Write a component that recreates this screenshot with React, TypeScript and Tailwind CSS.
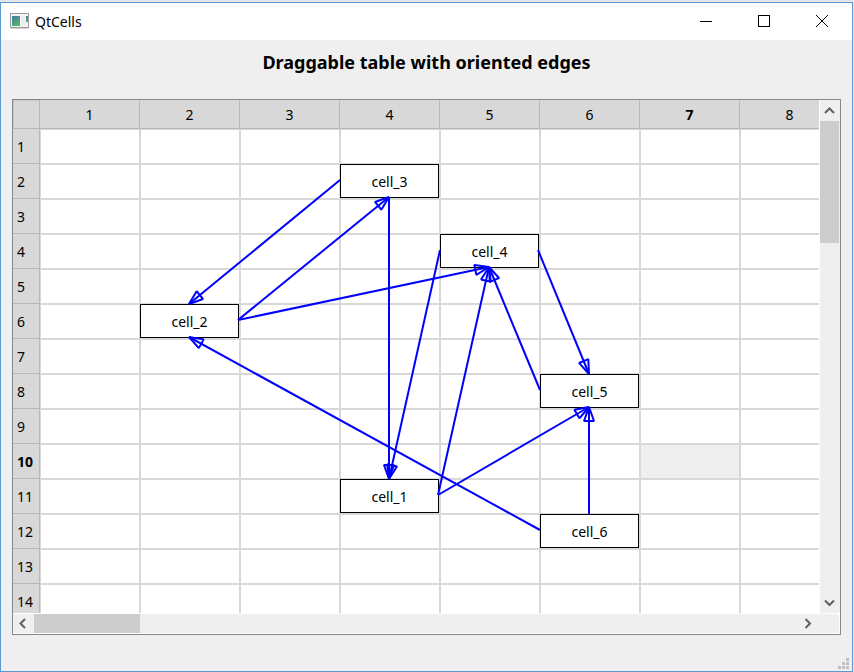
import React from 'react';

type Side = 'top' | 'right' | 'bottom' | 'left';
type Point = { x: number; y: number };
type CellNode = { id: string; col: number; row: number };
type Edge = { from: string; fromSide: Side; to: string; toSide: Side };

const COL_WIDTH = 100;
const ROW_HEIGHT = 35;
const COLUMNS = Array.from({ length: 8 }, (_, i) => i + 1);
const ROWS = Array.from({ length: 14 }, (_, i) => i + 1);
const CURRENT = { col: 7, row: 10 };

const nodes: CellNode[] = [
  { id: 'cell_1', col: 4, row: 11 },
  { id: 'cell_2', col: 2, row: 6 },
  { id: 'cell_3', col: 4, row: 2 },
  { id: 'cell_4', col: 5, row: 4 },
  { id: 'cell_5', col: 6, row: 8 },
  { id: 'cell_6', col: 6, row: 12 },
];

const edges: Edge[] = [
  { from: 'cell_3', fromSide: 'left', to: 'cell_2', toSide: 'top' },
  { from: 'cell_2', fromSide: 'right', to: 'cell_3', toSide: 'bottom' },
  { from: 'cell_2', fromSide: 'right', to: 'cell_4', toSide: 'bottom' },
  { from: 'cell_3', fromSide: 'bottom', to: 'cell_1', toSide: 'top' },
  { from: 'cell_4', fromSide: 'left', to: 'cell_1', toSide: 'top' },
  { from: 'cell_1', fromSide: 'right', to: 'cell_4', toSide: 'bottom' },
  { from: 'cell_1', fromSide: 'right', to: 'cell_5', toSide: 'bottom' },
  { from: 'cell_5', fromSide: 'left', to: 'cell_4', toSide: 'bottom' },
  { from: 'cell_4', fromSide: 'right', to: 'cell_5', toSide: 'top' },
  { from: 'cell_6', fromSide: 'top', to: 'cell_5', toSide: 'bottom' },
  { from: 'cell_6', fromSide: 'left', to: 'cell_2', toSide: 'bottom' },
];

function origin(node: CellNode): Point {
  return { x: (node.col - 1) * COL_WIDTH, y: (node.row - 1) * ROW_HEIGHT };
}

function anchor(id: string, side: Side): Point {
  const node = nodes.find((n) => n.id === id)!;
  const { x, y } = origin(node);
  if (side === 'top') return { x: x + 49, y };
  if (side === 'bottom') return { x: x + 49, y: y + 33 };
  if (side === 'left') return { x, y: y + 16 };
  return { x: x + 98, y: y + 16 };
}

/** A line ending in a hollow triangular arrow head. */
function Arrow({ edge }: { edge: Edge }) {
  const a = anchor(edge.from, edge.fromSide);
  const b = anchor(edge.to, edge.toSide);
  const length = Math.hypot(b.x - a.x, b.y - a.y);
  const ux = (b.x - a.x) / length;
  const uy = (b.y - a.y) / length;
  const bx = b.x - ux * 14;
  const by = b.y - uy * 14;
  const points = `${b.x},${b.y} ${bx - uy * 5},${by + ux * 5} ${bx + uy * 5},${by - ux * 5}`;
  return (
    <g>
      <line x1={a.x} y1={a.y} x2={b.x} y2={b.y} />
      <polygon points={points} strokeLinejoin="bevel" />
    </g>
  );
}

function AppIcon() {
  return (
    <svg width="19" height="16" viewBox="0 0 19 16" aria-hidden="true">
      <defs>
        <linearGradient id="pane" x1="0" y1="0" x2="0.4" y2="1">
          <stop offset="0" stopColor="#4a78a4" />
          <stop offset="1" stopColor="#52b06c" />
        </linearGradient>
      </defs>
      <rect x="0.5" y="0.5" width="18" height="14" fill="#f4f4f4" stroke="#9a9ea2" />
      <rect x="2" y="3" width="8" height="10" fill="url(#pane)" />
      <rect x="11" y="3" width="4" height="10" fill="#ececec" />
      <rect x="16" y="3" width="2" height="6" fill="url(#pane)" />
      <path d="M1 15.5h17" stroke="#d0d0d0" />
    </svg>
  );
}

function Chevron({ d }: { d: string }) {
  return (
    <svg width="11" height="11" viewBox="0 0 11 11" fill="none" stroke="#606060" strokeWidth="2" aria-hidden="true">
      <path d={d} />
    </svg>
  );
}

function Grip() {
  const dots = [[8, 0], [4, 4], [8, 4], [0, 8], [4, 8], [8, 8]];
  return (
    <svg width="11" height="11" className="absolute right-[3px] bottom-0.5" fill="#bfbfbf" aria-hidden="true">
      {dots.map(([x, y]) => (
        <rect key={`${x}-${y}`} x={x} y={y} width="3" height="3" />
      ))}
    </svg>
  );
}

function TitleBar() {
  const control = 'flex h-full w-[58px] items-center justify-center';
  return (
    <header className="flex h-[37px] shrink-0 items-center bg-white pr-px pb-px pl-[9px]">
      <AppIcon />
      <span className="grow pt-px pl-1.5 text-sm">QtCells</span>
      <button type="button" aria-label="Minimize" className={control}>
        <svg width="13" height="13" shapeRendering="crispEdges" stroke="#000">
          <path d="M0 6.5h12" />
        </svg>
      </button>
      <button type="button" aria-label="Maximize" className={control}>
        <svg width="12" height="12" shapeRendering="crispEdges" fill="none" stroke="#000">
          <rect x="0.5" y="0.5" width="11" height="11" />
        </svg>
      </button>
      <button type="button" aria-label="Close" className={control}>
        <svg width="12" height="12" stroke="#000">
          <path d="M0 0l12 12M12 0L0 12" />
        </svg>
      </button>
    </header>
  );
}

function Grid() {
  return (
    <div className="relative min-h-0 min-w-0 grow overflow-hidden">
      <table className="w-[827px] table-fixed border-separate border-spacing-0">
        <colgroup>
          <col className="w-[27px]" />
          {COLUMNS.map((c) => (
            <col key={c} className="w-[100px]" />
          ))}
        </colgroup>
        <thead>
          <tr className="h-[29px] bg-[#d8d8d8]">
            <td className="border border-t-[#c8c8c8] border-r-[#b8b8b8] border-b-[#b8b8b8] border-l-[#c8c8c8] p-0" />
            {COLUMNS.map((c) => (
              <th
                key={c}
                scope="col"
                className={`border-r border-b border-[#b8b8b8] p-0 pt-0.5 text-center leading-5 ${c === CURRENT.col ? 'font-bold' : 'font-normal'}`}
              >
                {c}
              </th>
            ))}
          </tr>
        </thead>
        <tbody>
          {ROWS.map((r) => (
            <tr key={r} className="h-[35px]">
              <th
                scope="row"
                className={`border-r border-b border-[#b8b8b8] bg-[#d8d8d8] p-0 pt-0.5 pl-1 text-left leading-5 ${r === CURRENT.row ? 'font-bold' : 'font-normal'}`}
              >
                {r}
              </th>
              {COLUMNS.map((c) => (
                <td
                  key={c}
                  className={`border border-[#d8d8d8] p-0 ${r === CURRENT.row && c === CURRENT.col ? 'bg-[#efefef]' : 'bg-white'}`}
                />
              ))}
            </tr>
          ))}
        </tbody>
      </table>
      <div className="absolute top-[29px] left-[27px]">
        {nodes.map((node) => {
          const { x, y } = origin(node);
          return (
            <div
              key={node.id}
              className="absolute flex h-[34px] w-[99px] cursor-move items-center justify-center border border-black bg-white pt-0.5"
              style={{ left: x, top: y }}
            >
              {node.id}
            </div>
          );
        })}
        <svg
          width="800"
          height="490"
          className="pointer-events-none absolute top-0 left-0 max-w-none overflow-visible"
          fill="none"
          stroke="#0000ff"
          strokeWidth="2"
          aria-hidden="true"
        >
          {edges.map((edge) => (
            <Arrow key={`${edge.from}-${edge.to}`} edge={edge} />
          ))}
        </svg>
      </div>
    </div>
  );
}

export default function App() {
  const arrow = 'flex shrink-0 items-center justify-center';
  return (
    <div className="flex h-screen flex-col bg-[#e4e4e4] pt-0.5 pr-px font-['Noto_Sans','Open_Sans',sans-serif] text-sm text-black">
      <div className="relative flex min-h-0 grow flex-col border border-[#5a9bd5] bg-[#efefef]">
        <TitleBar />
        <h1 className="py-2.5 text-center text-lg leading-6 font-bold">Draggable table with oriented edges</h1>
        <main className="mx-[11px] mt-[15px] mb-9 flex min-h-0 grow flex-col border border-[#828790] bg-white">
          <div className="flex min-h-0 grow">
            <Grid />
            <div className="ml-px flex w-5 shrink-0 flex-col bg-[#efefef] pr-px">
              <button type="button" aria-label="Scroll up" className={`${arrow} h-[21px]`}>
                <Chevron d="M1 8L5.500 3.500L10 8" />
              </button>
              <div className="h-[122px] bg-[#cdcdcd]" />
              <div className="grow" />
              <button type="button" aria-label="Scroll down" className={`${arrow} h-[21px]`}>
                <Chevron d="M1 3.500L5.500 8L10 3.500" />
              </button>
            </div>
          </div>
          <div className="mt-px mr-px mb-px flex h-[19px] shrink-0 bg-[#efefef]">
            <button type="button" aria-label="Scroll left" className={`${arrow} w-[21px] pr-0.5`}>
              <Chevron d="M8 1L3.500 5.500L8 10" />
            </button>
            <div className="w-[106px] bg-[#cdcdcd]" />
            <div className="grow" />
            <button type="button" aria-label="Scroll right" className={`${arrow} mr-5 w-[21px] pr-0.5`}>
              <Chevron d="M3.500 1L8 5.500L3.500 10" />
            </button>
          </div>
        </main>
        <Grip />
      </div>
    </div>
  );
}
